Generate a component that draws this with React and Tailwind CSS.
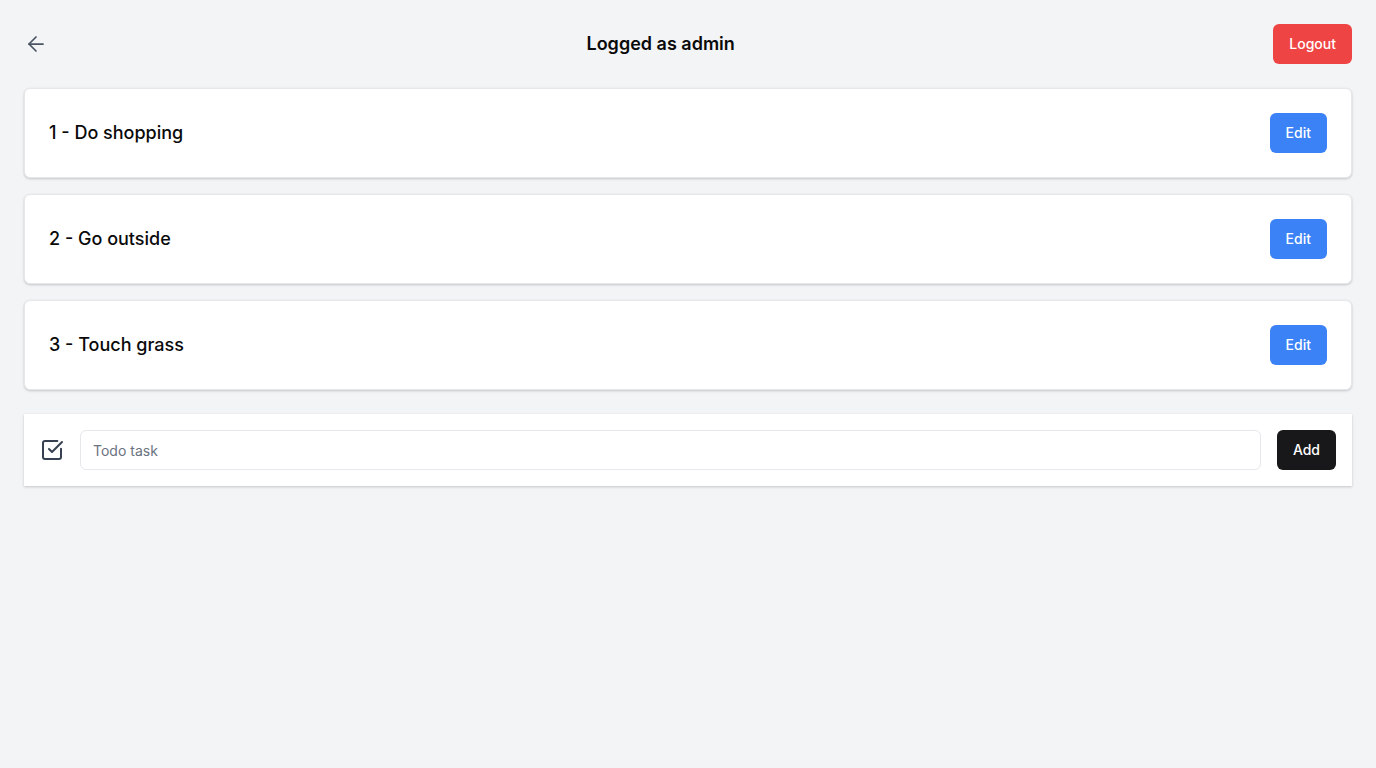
import React from "react";
import { ArrowLeft, SquareCheckBig } from "lucide-react";

const todos = [
  { id: 1, title: "Do shopping" },
  { id: 2, title: "Go outside" },
  { id: 3, title: "Touch grass" },
];

export default function App() {
  return (
    <div className="min-h-screen bg-[#f3f4f6] p-6 font-['Inter',sans-serif] text-[#111111]">
      <header className="flex items-center justify-between">
        <button className="w-6 h-10 flex items-center justify-start text-[#4b5563]">
          <ArrowLeft size={24} strokeWidth={1.75} />
        </button>
        <h1 className="text-lg font-semibold text-[#0a0a0a]">Logged as admin</h1>
        <button className="h-10 px-4 rounded-md bg-[#ef4444] text-white text-sm font-medium">
          Logout
        </button>
      </header>

      <div className="mt-6 flex flex-col gap-4">
        {todos.map((t) => (
          <div
            key={t.id}
            className="flex items-center justify-between bg-white border border-[#e5e7eb] rounded-md shadow-[0_1px_3px_rgba(0,0,0,0.12),0_1px_2px_rgba(0,0,0,0.08)] p-6"
          >
            <span className="text-lg font-medium text-[#0a0a0a]">
              {t.id} - {t.title}
            </span>
            <button className="h-10 px-4 rounded-md bg-[#3b82f6] text-white text-sm font-medium">
              Edit
            </button>
          </div>
        ))}
      </div>

      <div className="mt-6 flex items-center gap-4 bg-white p-4 shadow-[0_1px_3px_rgba(0,0,0,0.12),0_1px_2px_rgba(0,0,0,0.08)]">
        <SquareCheckBig size={24} strokeWidth={2} className="text-[#374151] shrink-0" />
        <input
          className="flex-1 h-10 rounded-md border border-[#e5e7eb] px-3 text-sm placeholder:text-[#6b7280] outline-none"
          placeholder="Todo task"
        />
        <button className="h-10 px-4 rounded-md bg-[#18181b] text-white text-sm font-medium">
          Add
        </button>
      </div>
    </div>
  );
}
